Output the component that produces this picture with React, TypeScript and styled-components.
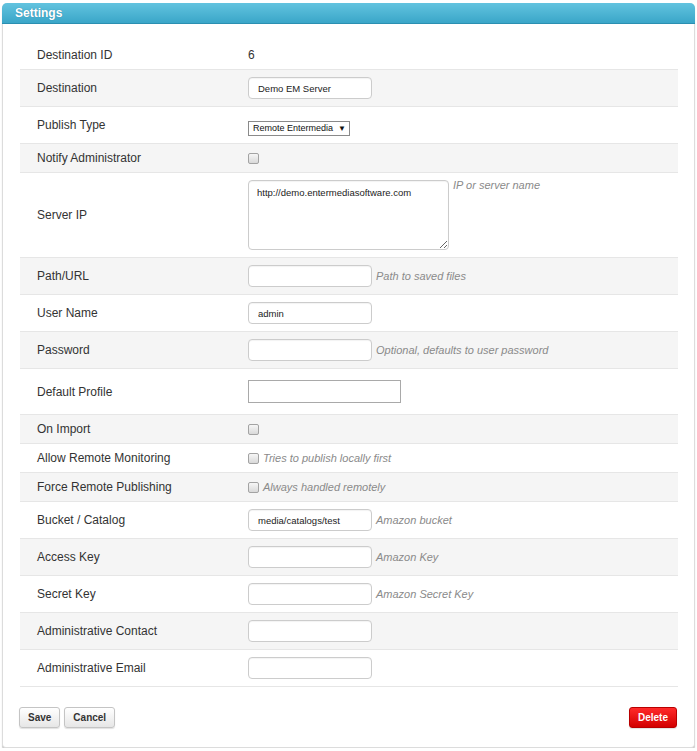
import React from 'react'
import styled, { createGlobalStyle } from 'styled-components'

const GlobalStyle = createGlobalStyle`
  html, body {
    margin: 0;
    padding: 0;
    background: #ffffff;
    font-family: "Liberation Sans", Arial, sans-serif;
  }
`

const Page = styled.div`
  padding: 3px 2px 0 2px;
  width: 697px;
  box-sizing: border-box;
`

const Panel = styled.section`
  border: 1px solid #dcdcdc;
  border-top: none;
  border-radius: 5px 5px 4px 4px;
  box-shadow: 0 2px 1px #c9c9c9;
  background: #fff;
`

const Header = styled.h3`
  margin: 0 -1px;
  height: 20px;
  padding: 0 13px;
  border-radius: 5px 5px 0 0;
  background: linear-gradient(#62c3df, #3aa6c8);
  border-bottom: 1px solid #2b8fb1;
  color: #fff;
  font-size: 12px;
  font-weight: bold;
  line-height: 21px;
  text-shadow: 0 0 1px rgba(0, 60, 90, 0.4);
`

const Body = styled.div`
  padding: 17px 16px 19px 17px;
`

const Table = styled.div`
  border-bottom: 1px solid #e6e6e6;
`

const Row = styled.div<{ $shade?: boolean }>`
  display: grid;
  grid-template-columns: 228px 1fr;
  padding: 7px 0;
  border-top: 1px solid #e6e6e6;
  background: ${p => (p.$shade ? '#f5f5f5' : 'transparent')};
  &:first-child {
    border-top: none;
  }
`

const Label = styled.div`
  align-self: center;
  padding-left: 17px;
  font-size: 12px;
  line-height: 14px;
  color: #333;
`

const Value = styled.div<{ $top?: boolean }>`
  display: flex;
  align-items: ${p => (p.$top ? 'flex-start' : 'center')};
  gap: 4px;
  min-height: 14px;
  font-size: 12px;
  line-height: 14px;
  color: #333;
`

const Input = styled.input<{ $plain?: boolean; $w?: number }>`
  box-sizing: border-box;
  display: block;
  width: ${p => p.$w ?? 124}px;
  height: ${p => (p.$plain ? 23 : 22)}px;
  margin: ${p => (p.$plain ? '4px 0' : '0')};
  padding: 0 9px;
  border: 1px solid ${p => (p.$plain ? '#a9a9a9' : '#cccccc')};
  border-radius: ${p => (p.$plain ? 0 : 4)}px;
  box-shadow: ${p => (p.$plain ? 'none' : 'inset 0 1px 1px rgba(0,0,0,0.05)')};
  background: #fff;
  font-family: "Liberation Sans", Arial, sans-serif;
  font-size: 9.5px;
  color: #222;
  outline: none;
`

const TextArea = styled.textarea`
  box-sizing: border-box;
  display: block;
  width: 201px;
  height: 70px;
  margin: 0;
  padding: 6px 8px;
  border: 1px solid #cccccc;
  border-radius: 4px;
  box-shadow: inset 0 1px 1px rgba(0,0,0,0.05);
  font-family: "Liberation Sans", Arial, sans-serif;
  font-size: 9.5px;
  line-height: 12px;
  color: #222;
  resize: both;
  outline: none;
`

const SelectWrap = styled.span`
  position: relative;
  display: flex;
  margin-top: 7px;
`

const Select = styled.select`
  appearance: none;
  display: block;
  box-sizing: border-box;
  width: 102px;
  height: 15px;
  margin: 0;
  padding: 0 0 0 4px;
  border: 1px solid #8a8a8a;
  border-radius: 0;
  background: #fff;
  font-family: "Liberation Sans", Arial, sans-serif;
  font-size: 9px;
  line-height: 13px;
  color: #111;
  outline: none;
`

const Arrow = styled.span`
  position: absolute;
  right: 4px;
  top: 0;
  font-size: 8px;
  line-height: 15px;
  color: #111;
  pointer-events: none;
`

const Check = styled.input.attrs({ type: 'checkbox' })`
  appearance: none;
  display: block;
  box-sizing: border-box;
  width: 11px;
  height: 11px;
  margin: 0;
  border: 1px solid #a3a3a3;
  border-radius: 2px;
  background: linear-gradient(#f6f6f6, #d9d9d9);
`

const Hint = styled.span<{ $top?: boolean }>`
  font-size: 11px;
  font-style: italic;
  line-height: ${p => (p.$top ? '11px' : '14px')};
  color: #8a8a8a;
`

const Actions = styled.div`
  display: flex;
  align-items: center;
  gap: 4px;
  margin: 20px 0 0 -1px;
`

const Button = styled.button<{ $danger?: boolean }>`
  height: 21px;
  padding: 0 8px;
  border: 1px solid ${p => (p.$danger ? '#b80000' : '#c4c4c4')};
  border-radius: 3px;
  background: ${p =>
    p.$danger ? 'linear-gradient(#ff2a2a, #d30000)' : 'linear-gradient(#ffffff, #e6e6e6)'};
  box-shadow: 0 1px 1px rgba(0, 0, 0, 0.12);
  color: ${p => (p.$danger ? '#fff' : '#333')};
  font-family: "Liberation Sans", Arial, sans-serif;
  font-size: 10px;
  font-weight: bold;
  cursor: pointer;
  &:last-child {
    margin-left: auto;
    margin-right: 1px;
  }
`

type Field =
  | { kind: 'text'; label: string; value: string }
  | { kind: 'input'; label: string; value?: string; hint?: string }
  | { kind: 'plain'; label: string }
  | { kind: 'area'; label: string; value: string; hint: string }
  | { kind: 'select'; label: string; value: string }
  | { kind: 'check'; label: string; hint?: string }

const fields: Field[] = [
  { kind: 'text', label: 'Destination ID', value: '6' },
  { kind: 'input', label: 'Destination', value: 'Demo EM Server' },
  { kind: 'select', label: 'Publish Type', value: 'Remote Entermedia' },
  { kind: 'check', label: 'Notify Administrator' },
  { kind: 'area', label: 'Server IP', value: 'http://demo.entermediasoftware.com', hint: 'IP or server name' },
  { kind: 'input', label: 'Path/URL', hint: 'Path to saved files' },
  { kind: 'input', label: 'User Name', value: 'admin' },
  { kind: 'input', label: 'Password', hint: 'Optional, defaults to user password' },
  { kind: 'plain', label: 'Default Profile' },
  { kind: 'check', label: 'On Import' },
  { kind: 'check', label: 'Allow Remote Monitoring', hint: 'Tries to publish locally first' },
  { kind: 'check', label: 'Force Remote Publishing', hint: 'Always handled remotely' },
  { kind: 'input', label: 'Bucket / Catalog', value: 'media/catalogs/test', hint: 'Amazon bucket' },
  { kind: 'input', label: 'Access Key', hint: 'Amazon Key' },
  { kind: 'input', label: 'Secret Key', hint: 'Amazon Secret Key' },
  { kind: 'input', label: 'Administrative Contact' },
  { kind: 'input', label: 'Administrative Email' },
]

function renderValue(f: Field) {
  switch (f.kind) {
    case 'text':
      return <Value>{f.value}</Value>
    case 'input':
      return (
        <Value>
          <Input defaultValue={f.value ?? ''} />
          {f.hint && <Hint>{f.hint}</Hint>}
        </Value>
      )
    case 'plain':
      return (
        <Value>
          <Input $plain $w={153} />
        </Value>
      )
    case 'area':
      return (
        <Value $top>
          <TextArea defaultValue={f.value} />
          <Hint $top>{f.hint}</Hint>
        </Value>
      )
    case 'select':
      return (
        <Value $top>
          <SelectWrap>
            <Select defaultValue={f.value}>
              <option>Remote Entermedia</option>
              <option>Local Folder</option>
              <option>FTP</option>
              <option>Amazon S3</option>
            </Select>
            <Arrow>▼</Arrow>
          </SelectWrap>
        </Value>
      )
    case 'check':
      return (
        <Value>
          <Check />
          {f.hint && <Hint>{f.hint}</Hint>}
        </Value>
      )
  }
}

export default function App() {
  return (
    <Page>
      <GlobalStyle />
      <Panel>
        <Header>Settings</Header>
        <Body>
          <Table>
            {fields.map((f, i) => (
              <Row key={f.label} $shade={i % 2 === 1}>
                <Label>{f.label}</Label>
                {renderValue(f)}
              </Row>
            ))}
          </Table>
          <Actions>
            <Button>Save</Button>
            <Button>Cancel</Button>
            <Button $danger>Delete</Button>
          </Actions>
        </Body>
      </Panel>
    </Page>
  )
}
